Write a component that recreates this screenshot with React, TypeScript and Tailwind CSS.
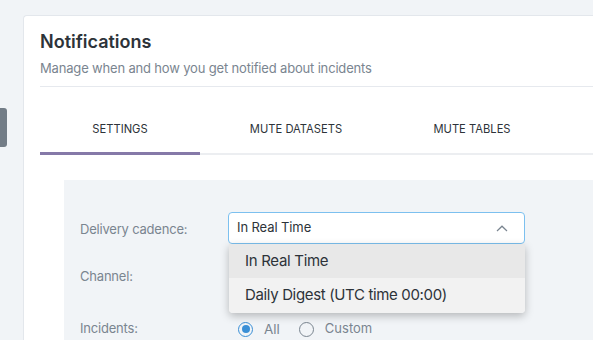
import React from "react";

export default function App() {
  return (
    <div
      className="w-[593px] h-[340px] overflow-hidden bg-[#f1f4f7] flex relative"
      style={{ fontFamily: "Inter, 'Noto Sans', sans-serif" }}
    >
      {/* left side tab */}
      <div className="absolute left-0 top-[108px] w-[7px] h-[39px] bg-[#737d87] rounded-r-[3px]" />
      <div className="ml-[23px] mt-[15px] flex-1 bg-white border-l border-t border-[#e3e7ec] rounded-tl-[4px] pl-[16px] flex flex-col min-w-0 overflow-hidden">
        <div className="shrink-0 pt-[14px] text-[18px] leading-[24px] font-semibold text-[#2d3339]">Notifications</div>
        <div className="shrink-0 mt-[5px] text-[13px] leading-[18px] text-[#7a8590] tracking-[-0.17px]">
          Manage when and how you get notified about incidents
        </div>
        <div className="shrink-0 mt-[9px] h-[1px] bg-[#e6e9ee]" />
        {/* tabs */}
        <div className="shrink-0 flex border-b-2 border-[#eceef1] h-[68px]">
          <div className="relative w-[160px] flex justify-center pt-[34px] text-[11.2px] leading-[16px] text-[#2d3339]">
            SETTINGS
            <div className="absolute left-0 right-0 bottom-[-2px] h-[3px] bg-[#8579a8]" />
          </div>
          <div className="w-[192px] flex justify-center pt-[34px] text-[11.2px] leading-[16px] text-[#2d3339]">
            MUTE DATASETS
          </div>
          <div className="w-[160px] flex justify-center pt-[34px] text-[11.2px] leading-[16px] text-[#2d3339]">
            MUTE TABLES
          </div>
        </div>
        {/* settings panel */}
        <div className="shrink-0 ml-[24px] mt-[25px] h-[200px] bg-[#f1f4f7] pl-[16px] pt-[32px] relative">
          <div className="flex items-center h-[32px]">
            <div className="w-[148px] pt-[3px] text-[13px] text-[#7a8590] tracking-[-0.2px]">Delivery cadence:</div>
            <div className="relative w-[297px]">
              <div className="h-[32px] bg-white border border-[#7cc0ef] rounded-[4px] flex items-center justify-between pl-[8px] pr-[16px]">
                <span className="text-[13px] text-[#2d3339] tracking-[-0.1px]">In Real Time</span>
                <svg width="12" height="7" viewBox="0 0 12 7" fill="none">
                  <path d="M1 6L6 1.2L11 6" stroke="#7a8590" strokeWidth="1.2" />
                </svg>
              </div>
              <div className="absolute left-[1px] right-0 top-[32px] rounded-b-[4px] overflow-hidden shadow-[0_3px_8px_rgba(0,0,0,0.25)] z-10">
                <div className="h-[34px] bg-[#e8e8e8] flex items-center pl-[16px] text-[15px] text-[#2d3339] tracking-[-0.3px]">In Real Time</div>
                <div className="h-[35px] bg-[#f2f2f2] flex items-center pl-[16px] text-[15px] text-[#2d3339] tracking-[-0.35px]">
                  Daily Digest (UTC time 00:00)
                </div>
              </div>
            </div>
          </div>
          <div className="flex items-center h-[32px] mt-[16px]">
            <div className="w-[148px] pt-[2px] text-[13px] text-[#7a8590] tracking-[-0.2px]">Channel:</div>
          </div>
          <div className="flex items-center h-[32px] mt-[21px]">
            <div className="w-[158px] text-[13px] text-[#7a8590] tracking-[-0.2px]">Incidents:</div>
            <div className="flex items-center gap-[11px]">
              <div className="w-[15px] h-[15px] rounded-full border-[1.5px] border-[#3a8fd6] flex items-center justify-center">
                <div className="w-[8px] h-[8px] rounded-full bg-[#3a8fd6]" />
              </div>
              <span className="text-[13.5px] text-[#7a8590]">All</span>
            </div>
            <div className="flex items-center gap-[11px] ml-[19px]">
              <div className="w-[15px] h-[15px] rounded-full border-[1.5px] border-[#7a8590]" />
              <span className="text-[13px] text-[#7a8590]">Custom</span>
            </div>
          </div>
        </div>
      </div>
    </div>
  );
}
